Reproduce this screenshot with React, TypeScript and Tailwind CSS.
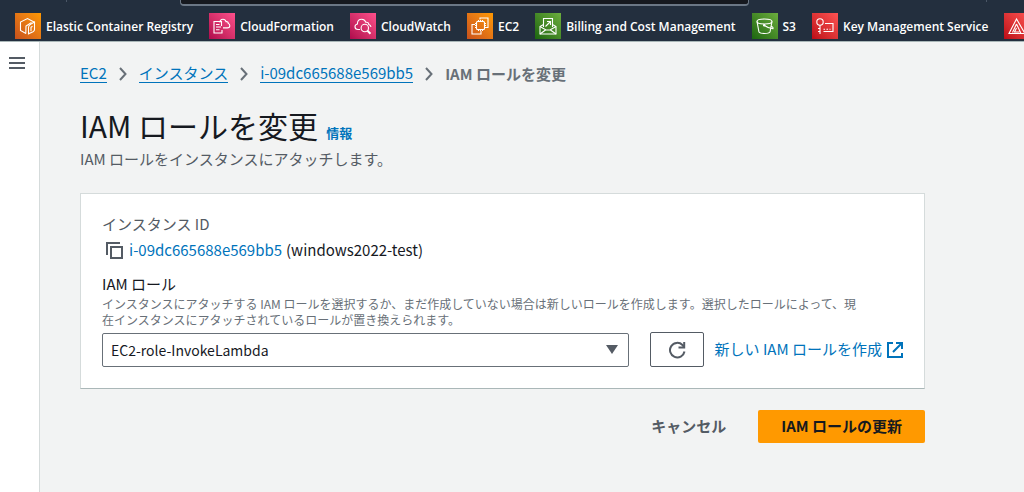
import { useState } from 'react';
import type { ReactNode } from 'react';

type Service = {
  name: string;
  tile: string;
  icon: ReactNode;
  iconOnly?: boolean;
};

const orange = 'bg-linear-to-tr from-[#c8511b] to-[#ff9900]';
const pink = 'bg-linear-to-tr from-[#b0084d] to-[#ff4f8b]';
const green = 'bg-linear-to-tr from-[#1b660f] to-[#6cae3e]';
const red = 'bg-linear-to-tr from-[#bd0816] to-[#ff5252]';

const services: Service[] = [
  {
    name: 'Elastic Container Registry',
    tile: orange,
    icon: (
      <>
        <path d="M11 20.5 5.5 17.5V9L12.5 5.5 19 9" />
        <path d="M13.5 20.8v-6.5c0-1.5 1-2.5 2.5-3.3l3.5-2v7.5c0 1-.5 1.7-1.5 2.2z" />
        <path d="m10.8 20.5.2-7.5 5.5-3.5M16 18.2v-4l1.5-1" />
      </>
    ),
  },
  {
    name: 'CloudFormation',
    tile: pink,
    icon: (
      <>
        <path d="M13 17v3H5V8.5h7.5V13" />
        <path d="M7 11.5h3.5M7 14h5M7 16.8h3.5" />
        <path d="M11 9.5c0-2 1.3-3.2 3-3.2 1.6 0 2.6 1 3 2.4 1.5-.4 2.3.6 2.3 1.8 1.2.4 1.5 1.3 1.5 2.2 0 1.4-1 2.2-2.5 2.2H14" />
      </>
    ),
  },
  {
    name: 'CloudWatch',
    tile: pink,
    icon: (
      <>
        <path d="M10 16.5H8c-2 0-3-1.1-3-2.7 0-1.5 1-2.5 2.4-2.8 0-3 2-4.7 4.3-4.7 2.2 0 3.5 1.3 4.2 3 1.8-.4 2.8.7 2.9 2.2 1.3.4 2 1.3 2.2 2.5" />
        <circle cx="14.8" cy="15" r="3.7" />
        <path d="m17.5 17.8 3 3" strokeWidth="2" />
      </>
    ),
  },
  {
    name: 'EC2',
    tile: orange,
    icon: (
      <>
        <rect x="9.5" y="8.5" width="8" height="8" rx="1" />
        <path d="M11.5 8.5V7M13.5 8.5V7M15.5 8.5V7M11.5 18v-1.5M13.5 18v-1.5M15.5 18v-1.5M8 10.500h1.500M8 12.500h1.500M8 14.500h1.500M17.500 10.500H19M17.500 12.500H19M17.500 14.500H19" />
        <path d="M13 6.500V5h8v9.500h-2M8 11.500H5V21h9v-3" />
      </>
    ),
  },
  {
    name: 'Billing and Cost Management',
    tile: green,
    icon: (
      <>
        <path d="M8.500 14V5.500h9V14" />
        <path d="M8.500 11.500 5 13.500V21h16v-7.500l-3.500-2" />
        <path d="m5 13.500 6 3.500h4l6-3.500M5 21l5.500-4M21 21l-5.500-4" />
        <path d="m10.500 13.500 4.500-4.500M12 8.500h3.500V12" />
      </>
    ),
  },
  {
    name: 'S3',
    tile: green,
    icon: (
      <>
        <ellipse cx="12.5" cy="8.5" rx="7.5" ry="2.5" />
        <path d="m5 8.500 2 10.500c1.500 2 9.500 2 11 0l2-10.500" />
        <path d="M12.500 12.500c2.500 1.800 6 3.200 8.500 3.200.5-1.200-.8-2-2-2.500" />
        <circle cx="12.2" cy="12.3" r=".7" fill="white" />
      </>
    ),
  },
  {
    name: 'Key Management Service',
    tile: red,
    icon: (
      <>
        <circle cx="8" cy="9" r="3.2" />
        <path d="M8 12.200V21M8 15.500H6M8 18.500H6" />
        <path d="M13 10.500h8v8h-9.500" />
        <path d="M11.500 16.200H13M14.500 16.200H16M17.500 16.200h1" />
      </>
    ),
  },
  {
    name: 'Trusted Advisor',
    tile: red,
    iconOnly: true,
    icon: (
      <>
        <path d="M12.500 6 5 20.500h16z" />
        <path d="m12.500 11-4 8.500M12.500 11l4.500 9.500M12.500 15l-2 4h5" />
      </>
    ),
  },
];

const ServiceBar = () => (
  <header className="border-b border-[#aab7b8] bg-[#232f3e] text-white">
    <div className="flex h-[13px] items-start">
      <div className="ml-[66px] h-0.5 w-px bg-[#4a5666]" />
      <input
        aria-label="Search"
        className="mr-[237px] ml-[113px] h-[6px] min-w-0 flex-1 rounded-b-sm border-x border-b-2 border-[#6b7785] bg-[#16191f]"
      />
      <div className="mr-[37px] h-0.5 w-px bg-[#4a5666]" />
    </div>
    <nav className="flex gap-4 overflow-hidden pl-[15px]">
      {services.map((service) => (
        <a
          key={service.name}
          href="#"
          aria-label={service.name}
          className="flex shrink-0 items-center gap-[5px] pb-0.5"
        >
          <span className={`size-[26px] ${service.tile}`}>
            <svg viewBox="0 0 26 26" className="size-full" fill="none" stroke="white" strokeWidth="1.1">
              {service.icon}
            </svg>
          </span>
          {!service.iconOnly && (
            <span className="pt-0.5 font-['Open_Sans'] text-xs font-semibold whitespace-nowrap">{service.name}</span>
          )}
        </a>
      ))}
    </nav>
  </header>
);

const Chevron = () => (
  <svg viewBox="0 0 8 14" className="h-3.5 w-2" fill="none" stroke="#687078" strokeWidth="2">
    <path d="m1 1 5.500 6L1 13" />
  </svg>
);

const crumbs = ['EC2', 'インスタンス', 'i-09dc665688e569bb5'];

const Breadcrumbs = () => (
  <nav className="flex items-center gap-3 text-[15px] leading-[18px]">
    {crumbs.map((crumb) => (
      <div key={crumb} className="flex items-center gap-3">
        <a href="#" className="border-b border-[#0073bb] text-[#0073bb]">
          {crumb}
        </a>
        <Chevron />
      </div>
    ))}
    <span className="font-bold text-[#687078]">IAM ロールを変更</span>
  </nav>
);

const App = () => {
  const [role, setRole] = useState('EC2-role-InvokeLambda');

  return (
    <div className="flex min-h-screen flex-col bg-[#f2f3f3] font-['Noto_Sans_CJK_JP',sans-serif] text-[#16191f]">
      <ServiceBar />
      <div className="flex flex-1">
        <aside className="w-10 shrink-0 border-r border-[#d5dbdb] bg-white pt-3.5 pl-[9px]">
          <button aria-label="メニューを開く" className="block">
            <svg viewBox="0 0 16 14" className="h-3.5 w-4" stroke="#545b64" strokeWidth="2">
              <path d="M0 2h16M0 7h16M0 12h16" />
            </svg>
          </button>
        </aside>

        <main className="min-w-0 flex-1 pt-[22px] pr-[99px] pl-10">
          <Breadcrumbs />

          <div className="mt-6 flex items-baseline gap-2">
            <h1 className="text-[30px] leading-9">IAM ロールを変更</h1>
            <a href="#" className="text-[13px] font-bold text-[#0073bb]">
              情報
            </a>
          </div>
          <p className="mt-1.5 text-[15px] leading-5 text-[#545b64]">IAM ロールをインスタンスにアタッチします。</p>

          <section className="mt-6 border border-[#d5dbdb] border-b-[#aab7b8] bg-white px-[21px] pt-5 pb-[21px]">
            <div className="text-[15px] leading-5 text-[#545b64]">インスタンス ID</div>
            <div className="mt-1 flex items-center text-[15px] leading-6">
              <button aria-label="コピー" className="mr-1.5 ml-1">
                <svg viewBox="0 0 17 17" className="size-[17px]" fill="none" stroke="#545b64" strokeWidth="2">
                  <path d="M1 13V1h13" />
                  <path d="M5 5h11v11H5z" />
                </svg>
              </button>
              <a href="#" className="mr-1 text-[#0073bb]">
                i-09dc665688e569bb5
              </a>
              <span>(windows2022-test)</span>
            </div>

            <label htmlFor="role" className="mt-3 block text-[15px] leading-5">
              IAM ロール
            </label>
            <p className="mt-0.5 mb-1 text-xs leading-4 text-[#687078]">
              インスタンスにアタッチする IAM ロールを選択するか、まだ作成していない場合は新しいロールを作成します。選択したロールによって、現
              <br />
              在インスタンスにアタッチされているロールが置き換えられます。
            </p>
            <div className="flex items-center">
              <div className="relative flex-1">
                <select
                  id="role"
                  value={role}
                  onChange={(e) => setRole(e.target.value)}
                  className="block h-[34px] w-full appearance-none rounded-xs border border-[#687078] bg-white px-2 text-sm"
                >
                  <option>EC2-role-InvokeLambda</option>
                </select>
                <svg viewBox="0 0 12 9" className="pointer-events-none absolute top-3 right-[11px] h-[9px] w-3" fill="#545b64">
                  <path d="M0 0h12L6 9z" />
                </svg>
              </div>
              <button
                aria-label="更新"
                className="ml-[21px] flex h-[35px] w-[54px] items-center justify-center rounded-xs border border-[#545b64]"
              >
                <svg viewBox="0 0 18 18" className="size-[18px]" fill="none" stroke="#545b64" strokeWidth="2">
                  <path d="M16.500 10.500A7.300 7.300 0 1 1 14.500 4l1.500 1.800" />
                  <path d="M16.200 1v5.500H10.500" />
                </svg>
              </button>
              <a href="#" className="ml-[11px] flex items-center gap-[5px] text-[15px] text-[#0073bb]">
                新しい IAM ロールを作成
                <svg viewBox="0 0 16 16" className="size-4" fill="none" stroke="currentColor" strokeWidth="2">
                  <path d="M6 1H1v14h14v-4" />
                  <path d="M9 1h6v6M15 1 6 10" />
                </svg>
              </a>
            </div>
          </section>

          <div className="mt-[21px] flex items-center justify-end gap-8 text-[15px] font-bold">
            <button className="text-[#545b64]">キャンセル</button>
            <button className="h-[33px] rounded-xs bg-[#ff9900] px-[23px]">IAM ロールの更新</button>
          </div>
        </main>
      </div>
    </div>
  );
};

export default App;
